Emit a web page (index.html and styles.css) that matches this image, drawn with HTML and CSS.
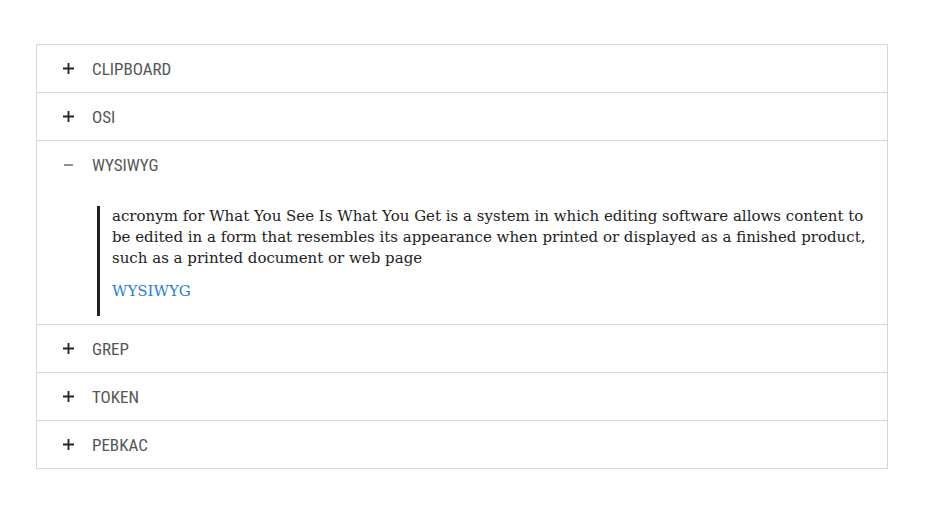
FILE: index.html
```html
<!DOCTYPE html>
<html>
<head>
<meta charset="utf-8">
<link rel="stylesheet" href="styles.css">
</head>
<body>
<div class="accordion">
  <div class="item">
    <div class="head"><svg class="sign" width="11" height="11" viewBox="0 0 11 11"><path d="M0 5.5h11M5.5 0v11" stroke="#222" stroke-width="1.8"/></svg><span class="title">CLIPBOARD</span></div>
  </div>
  <div class="item">
    <div class="head"><svg class="sign" width="11" height="11" viewBox="0 0 11 11"><path d="M0 5.5h11M5.5 0v11" stroke="#222" stroke-width="1.8"/></svg><span class="title">OSI</span></div>
  </div>
  <div class="item open">
    <div class="head"><svg class="sign" width="11" height="11" viewBox="0 0 11 11"><path d="M1 6h9" stroke="#222" stroke-width="1"/></svg><span class="title">WYSIWYG</span></div>
    <div class="panel">
      <blockquote class="quote">
        <p>acronym for What You See Is What You Get is a system in which editing software allows content to be edited in a form that resembles its appearance when printed or displayed as a finished product, such as a printed document or web page</p>
        <a class="link" href="#">WYSIWYG</a>
      </blockquote>
    </div>
  </div>
  <div class="item">
    <div class="head"><svg class="sign" width="11" height="11" viewBox="0 0 11 11"><path d="M0 5.5h11M5.5 0v11" stroke="#222" stroke-width="1.8"/></svg><span class="title">GREP</span></div>
  </div>
  <div class="item">
    <div class="head"><svg class="sign" width="11" height="11" viewBox="0 0 11 11"><path d="M0 5.5h11M5.5 0v11" stroke="#222" stroke-width="1.8"/></svg><span class="title">TOKEN</span></div>
  </div>
  <div class="item">
    <div class="head"><svg class="sign" width="11" height="11" viewBox="0 0 11 11"><path d="M0 5.5h11M5.5 0v11" stroke="#222" stroke-width="1.8"/></svg><span class="title">PEBKAC</span></div>
  </div>
</div>
</body>
</html>
```
FILE: styles.css
```css
body {
  margin: 44px 0 0 36px;
  background: #fff;
}
.accordion {
  width: 850px;
  border: 1px solid #d6d6d6;
}
.item + .item {
  border-top: 1px solid #d6d6d6;
}
.head {
  height: 47px;
  display: flex;
  align-items: center;
  padding-left: 26px;
  font-family: "Roboto Condensed", Roboto, "Liberation Sans", sans-serif;
  font-size: 17px;
  color: #555;
}
.sign {
  flex: none;
  margin-right: 18px;
}
.panel {
  padding: 18px 20px 8px 60px;
}
.quote {
  margin: 0;
  padding: 0 0 14px 12px;
  border-left: 3px solid #222;
  font-family: "DejaVu Serif", serif;
  font-size: 15px;
  line-height: 21px;
  color: #222;
}
.quote p {
  margin: 0 0 12px;
}
.link {
  color: #1f80d6;
  text-decoration: none;
}
```
